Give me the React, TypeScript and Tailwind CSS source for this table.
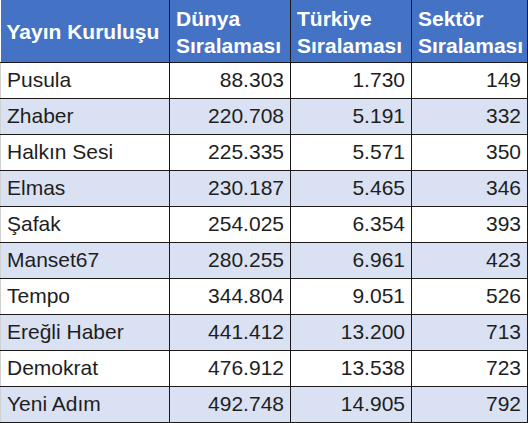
const rows: [string, string, string, string][] = [
  ["Pusula", "88.303", "1.730", "149"],
  ["Zhaber", "220.708", "5.191", "332"],
  ["Halkın Sesi", "225.335", "5.571", "350"],
  ["Elmas", "230.187", "5.465", "346"],
  ["Şafak", "254.025", "6.354", "393"],
  ["Manset67", "280.255", "6.961", "423"],
  ["Tempo", "344.804", "9.051", "526"],
  ["Ereğli Haber", "441.412", "13.200", "713"],
  ["Demokrat", "476.912", "13.538", "723"],
  ["Yeni Adım", "492.748", "14.905", "792"],
];

export default function App() {
  return (
    <div className="h-[423px] w-[528px] bg-white font-['Liberation_Sans',Arial,sans-serif]">
      <table className="w-[527px] table-fixed border-collapse">
        <colgroup>
          <col className="w-[169px]" />
          <col className="w-[121px]" />
          <col className="w-[121px]" />
          <col className="w-[116px]" />
        </colgroup>
        <thead>
          <tr className="h-[62px] bg-[#4472c4] text-left text-[21px] font-bold leading-[27px] text-white">
            <th className="border border-t-0 border-l-0 border-[#1a1a1a] pl-1.5 pr-0 pt-0.5 whitespace-nowrap">Yayın Kuruluşu</th>
            <th className="border border-t-0 border-[#1a1a1a] pl-1.5 pr-0 pt-0.5 whitespace-nowrap">
              Dünya
              <br />
              Sıralaması
            </th>
            <th className="border border-t-0 border-[#1a1a1a] pl-1.5 pr-0 pt-0.5 whitespace-nowrap">
              Türkiye
              <br />
              Sıralaması
            </th>
            <th className="border border-t-0 border-[#1a1a1a] pl-1.5 pr-0 pt-0.5 whitespace-nowrap">
              Sektör
              <br />
              Sıralaması
            </th>
          </tr>
        </thead>
        <tbody className="text-[21px] text-[#1e1e1e]">
          {rows.map((r, i) => (
            <tr key={r[0]} className={i % 2 === 1 ? "h-9 bg-[#d9e1f2]" : "h-9 bg-white"}>
              <td className="border border-l-[#d0d0d0] border-[#1a1a1a] px-1.5">{r[0]}</td>
              <td className="border border-[#1a1a1a] px-1.5 text-right">{r[1]}</td>
              <td className="border border-[#1a1a1a] px-1.5 text-right">{r[2]}</td>
              <td className="border border-[#1a1a1a] px-1.5 text-right">{r[3]}</td>
            </tr>
          ))}
        </tbody>
      </table>
    </div>
  );
}
